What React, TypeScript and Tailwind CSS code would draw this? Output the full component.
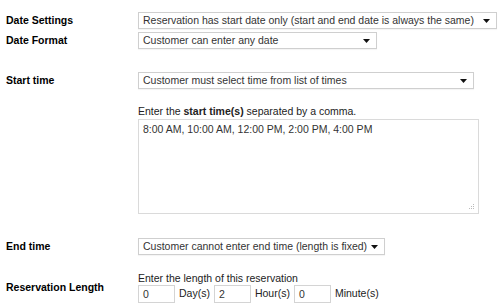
import React from "react";

const Caret = () => (
  <svg width="7" height="4" viewBox="0 0 7 4" className="absolute right-[7px] top-1/2 -translate-y-1/2">
    <path d="M0 0H7L3.5 4Z" fill="#111" />
  </svg>
);

const Select = ({ value, width }: { value: string; width: string }) => (
  <div className={`relative h-[17px] ${width}`}>
    <div className="h-full w-full border border-[#cfcfcf] bg-white pl-[4px] pr-[18px] leading-[15px] text-[#333] shadow-[0_1px_1px_rgba(0,0,0,0.04)] whitespace-nowrap overflow-hidden">
      {value}
    </div>
    <Caret />
  </div>
);

const Label = ({ children }: { children: React.ReactNode }) => (
  <div className="w-[132px] shrink-0 font-bold text-black">{children}</div>
);

const NumBox = ({ value }: { value: string }) => (
  <div className="h-[18px] w-[37px] border border-[#d4d4d4] bg-white pl-[4px] leading-[16px] text-[#333]">{value}</div>
);

export default function App() {
  return (
    <div className="h-[308px] w-[501px] overflow-hidden bg-white pl-[6px] pt-[12px] font-['Liberation_Sans',Arial,sans-serif] text-[10.5px] text-[#333]">
      <div className="flex items-center">
        <Label>Date Settings</Label>
        <Select value="Reservation has start date only (start and end date is always the same)" width="w-[359px]" />
      </div>
      <div className="mt-[3px] flex items-center">
        <Label>Date Format</Label>
        <Select value="Customer can enter any date" width="w-[239px]" />
      </div>

      <div className="mt-[23px] flex">
        <Label>
          <div className="h-[17px] leading-[17px]">Start time</div>
        </Label>
        <div className="flex flex-col">
          <Select value="Customer must select time from list of times" width="w-[336px]" />
          <p className="mt-[16px] leading-[13px] text-[#222]">
            Enter the <b>start time(s)</b> separated by a comma.
          </p>
          <div className="relative mt-[1px] h-[95px] w-[341px] border border-[#dadada] bg-white px-[4px] pt-[2px] leading-[14px] text-[#333]">
            8:00 AM, 10:00 AM, 12:00 PM, 2:00 PM, 4:00 PM
            <svg width="6" height="6" viewBox="0 0 6 6" className="absolute bottom-[3px] right-[3px]">
              <g fill="#bbb">
                <rect x="4" y="0" width="1" height="1" />
                <rect x="2" y="2" width="1" height="1" />
                <rect x="4" y="2" width="1" height="1" />
                <rect x="0" y="4" width="1" height="1" />
                <rect x="2" y="4" width="1" height="1" />
                <rect x="4" y="4" width="1" height="1" />
              </g>
            </svg>
          </div>
        </div>
      </div>

      <div className="mt-[24px] flex items-center">
        <Label>End time</Label>
        <Select value="Customer cannot enter end time (length is fixed)" width="w-[247px]" />
      </div>

      <div className="mt-[17px] flex items-center">
        <Label>Reservation Length</Label>
        <div className="flex flex-col">
          <p className="leading-[13px] text-[#222]">Enter the length of this reservation</p>
          <div className="flex items-center gap-[4px] text-[#222]">
            <NumBox value="0" />
            <span>Day(s)</span>
            <NumBox value="2" />
            <span>Hour(s)</span>
            <NumBox value="0" />
            <span>Minute(s)</span>
          </div>
        </div>
      </div>
    </div>
  );
}
